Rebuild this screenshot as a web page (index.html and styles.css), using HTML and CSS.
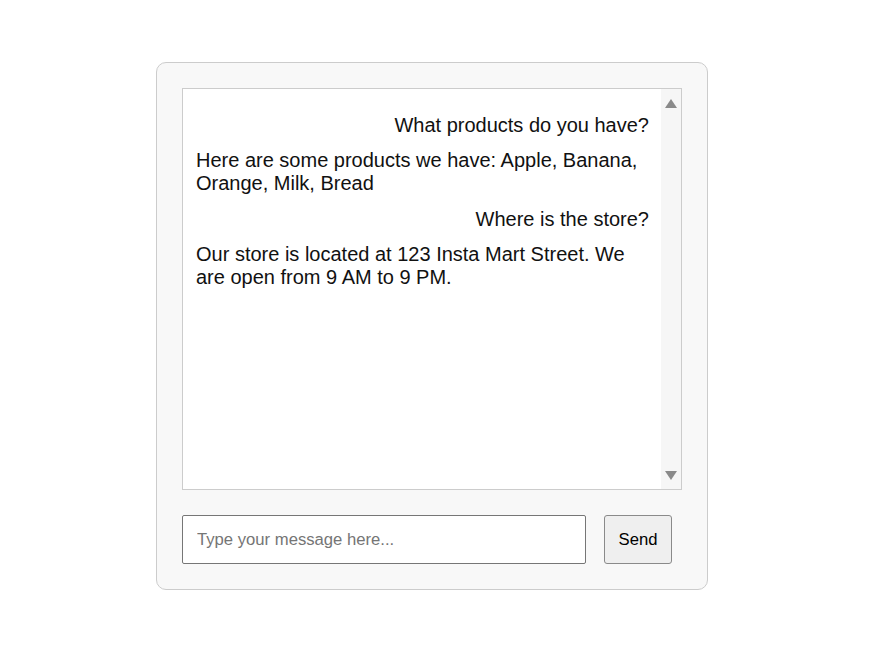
FILE: index.html
```html
<!DOCTYPE html>
<html>
<head>
<meta charset="utf-8">
<link rel="stylesheet" href="styles.css">
</head>
<body>
<div class="page">
  <div class="container">
    <div class="chat">
      <div class="messages">
        <div class="msg user">What products do you have?</div>
        <div class="msg bot">Here are some products we have: Apple, Banana, Orange, Milk, Bread</div>
        <div class="msg user">Where is the store?</div>
        <div class="msg bot">Our store is located at 123 Insta Mart Street. We are open from 9 AM to 9 PM.</div>
      </div>
      <div class="scrollbar">
        <div class="arrow"><svg width="12" height="9" viewBox="0 0 12 9"><polygon points="6,0 12,9 0,9" fill="#8a8a8a"/></svg></div>
        <div class="arrow"><svg width="12" height="9" viewBox="0 0 12 9"><polygon points="0,0 12,0 6,9" fill="#8a8a8a"/></svg></div>
      </div>
    </div>
    <div class="input-row">
      <input class="text-input" type="text" placeholder="Type your message here...">
      <button class="send">Send</button>
    </div>
  </div>
</div>
</body>
</html>
```
FILE: styles.css
```css
html, body {
  margin: 0;
  padding: 0;
  background: #ffffff;
  font-family: "Liberation Sans", Arial, sans-serif;
}
.page {
  padding: 62px 0 0 156px;
}
.container {
  box-sizing: border-box;
  width: 552px;
  height: 528px;
  padding: 25px;
  border: 1px solid #cccccc;
  border-radius: 10px;
  background: #f8f8f8;
}
.chat {
  box-sizing: border-box;
  height: 402px;
  border: 1px solid #cccccc;
  background: #ffffff;
  display: flex;
}
.messages {
  flex: 1;
  padding: 12px 12px 12px 13px;
  font-size: 20px;
  line-height: 23px;
  color: #111111;
}
.msg {
  margin: 12.5px 0;
}
.msg.user {
  text-align: right;
}
.scrollbar {
  width: 20px;
  background: #f6f6f6;
  display: flex;
  flex-direction: column;
  justify-content: space-between;
}
.arrow {
  height: 28px;
  display: flex;
  align-items: center;
  justify-content: center;
}
.arrow svg {
  display: block;
}
.input-row {
  margin-top: 25px;
  display: flex;
  gap: 18px;
}
.text-input {
  box-sizing: border-box;
  width: 404px;
  height: 49px;
  margin: 0;
  padding: 0 14px;
  border: 1px solid #767676;
  border-radius: 2px;
  font-family: "Liberation Sans", Arial, sans-serif;
  font-size: 16.67px;
  color: #111111;
  background: #ffffff;
  outline: none;
}
.text-input::placeholder {
  color: #757575;
}
.send {
  box-sizing: border-box;
  width: 68px;
  height: 49px;
  margin: 0;
  padding: 0;
  border: 1px solid #8a8a8a;
  border-radius: 3px;
  background: #efefef;
  font-family: "Liberation Sans", Arial, sans-serif;
  font-size: 16.67px;
  color: #000000;
}
```
